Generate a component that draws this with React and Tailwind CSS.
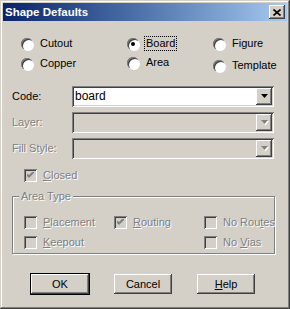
const sunken = 'shadow-[inset_1px_1px_0_#808080,inset_-1px_-1px_0_#ffffff,inset_2px_2px_0_#404040,inset_-2px_-2px_0_#d4d0c8]';
const raised = 'shadow-[inset_-1px_-1px_0_#404040,inset_1px_1px_0_#ffffff,inset_-2px_-2px_0_#808080,inset_2px_2px_0_#d4d0c8]';
const dis = 'text-[#808080] [text-shadow:1px_1px_0_#ffffff]';

const Radio = ({ label, checked, focus, className = '' }) => (
    <div className={`flex items-center h-[13px] ${className}`}>
        <span className="relative w-[12px] h-[12px] rounded-full bg-white shadow-[inset_1px_1px_0_#808080,inset_2px_2px_0_#404040,1px_1px_0_#ffffff]">
            {checked && <span className="absolute left-[4px] top-[4px] w-[4px] h-[4px] rounded-full bg-black" />}
        </span>
        <span className={`ml-[6px] px-[1px] leading-[13px] ${focus ? 'outline outline-1 outline-dotted outline-black' : ''}`}>{label}</span>
    </div>
);

const Check = ({ label, u, checked, className = '' }) => {
    const i = label.indexOf(u);
    return (
        <div className={`flex items-center h-[13px] whitespace-nowrap ${className}`}>
            <span className={`relative shrink-0 w-[13px] h-[13px] bg-[#d4d0c8] ${sunken}`}>
                {checked && (
                    <svg className="absolute left-[3px] top-[3px]" width="7" height="7" viewBox="0 0 7 7">
                        <path d="M0 2.5 L2 4.5 L7 -0.5" stroke="#808080" strokeWidth="2" fill="none" />
                    </svg>
                )}
            </span>
            <span className={`ml-[6px] leading-[13px] ${dis}`}>
                {label.slice(0, i)}<u>{u}</u>{label.slice(i + 1)}
            </span>
        </div>
    );
};

const Combo = ({ value, disabled }) => (
    <div className={`ml-auto w-[202px] h-[21px] flex items-center p-[2px] ${sunken} ${disabled ? 'bg-[#d4d0c8]' : 'bg-white'}`}>
        <span className="flex-1 pl-[1px] text-[12px] leading-[17px]">{value}</span>
        <span className={`w-[16px] h-[17px] flex items-center justify-center bg-[#d4d0c8] ${raised}`}>
            <svg width="7" height="5" viewBox="0 0 7 5" className="overflow-visible">
                {disabled && <path d="M1 1 H8 L4.5 5.5 Z" fill="#ffffff" />}
                <path d="M0 0 H7 L3.5 4 Z" fill={disabled ? '#808080' : '#000000'} />
            </svg>
        </span>
    </div>
);

const Button = ({ children, def }) => (
    <div className={def ? 'border border-black' : 'p-[1px]'}>
        <button className={`w-[58px] h-[20px] bg-[#d4d0c8] ${raised} leading-[20px] text-[11px]`}>{children}</button>
    </div>
);

export default function App() {
    return (
        <div className="w-[290px] h-[309px] bg-[#d4d0c8] p-[3px] flex flex-col text-[11px] text-black font-['Liberation_Sans',Arial,sans-serif] shadow-[inset_-1px_-1px_0_#404040,inset_1px_1px_0_#d4d0c8,inset_-2px_-2px_0_#808080,inset_2px_2px_0_#ffffff]">
            <div className="h-[18px] flex items-center justify-between pl-[2px] pr-[2px] bg-linear-to-r from-[#0a246a] to-[#a6caf0]">
                <span className="text-white font-bold text-[11.5px] leading-[18px]">Shape Defaults</span>
                <span className={`w-[16px] h-[14px] flex items-center justify-center bg-[#d4d0c8] ${raised}`}>
                    <svg width="8" height="7" viewBox="0 0 8 7">
                        <path d="M0.5 0.5 L7.5 6.5 M7.5 0.5 L0.5 6.5" stroke="#000" strokeWidth="1.6" />
                    </svg>
                </span>
            </div>

            <div className="mt-[16px] pl-[18px] grid grid-cols-[106px_86px_1fr] gap-y-[7px]">
                <Radio label="Cutout" />
                <Radio label="Board" checked focus />
                <Radio label="Figure" />
                <Radio label="Copper" />
                <Radio label="Area" className="-mt-[1px]" />
                <Radio label="Template" className="mt-[2px]" />
            </div>

            <div className="mt-[14px] pl-[9px] pr-[13px] flex flex-col gap-[5px]">
                <div className="flex items-center">
                    <span>Code:</span>
                    <Combo value="board" />
                </div>
                <div className="flex items-center">
                    <span className={dis}>Layer:</span>
                    <Combo disabled />
                </div>
                <div className="flex items-center">
                    <span className={dis}>Fill Style:</span>
                    <Combo disabled />
                </div>
            </div>

            <Check label="Closed" u="C" checked className="mt-[10px] ml-[21px]" />

            <div className="relative mt-[14px] ml-[9px] mr-[12px] h-[58px] border border-[#808080] shadow-[1px_1px_0_#ffffff,inset_1px_1px_0_#ffffff]">
                <span className={`absolute -top-[8px] left-[6px] px-[2px] bg-[#d4d0c8] leading-[14px] ${dis}`}>Area Type</span>
                <div className="mt-[19px] pl-[11px] grid grid-cols-[90px_90px_1fr] gap-y-[7px]">
                    <Check label="Placement" u="P" />
                    <Check label="Routing" u="R" checked />
                    <Check label="No Routes" u="t" />
                    <Check label="Keepout" u="K" />
                    <span />
                    <Check label="No Vias" u="V" />
                </div>
            </div>

            <div className="mt-[19px] pl-[27px] flex gap-[23px]">
                <Button def>OK</Button>
                <Button>Cancel</Button>
                <Button><u>H</u>elp</Button>
            </div>
        </div>
    );
}
